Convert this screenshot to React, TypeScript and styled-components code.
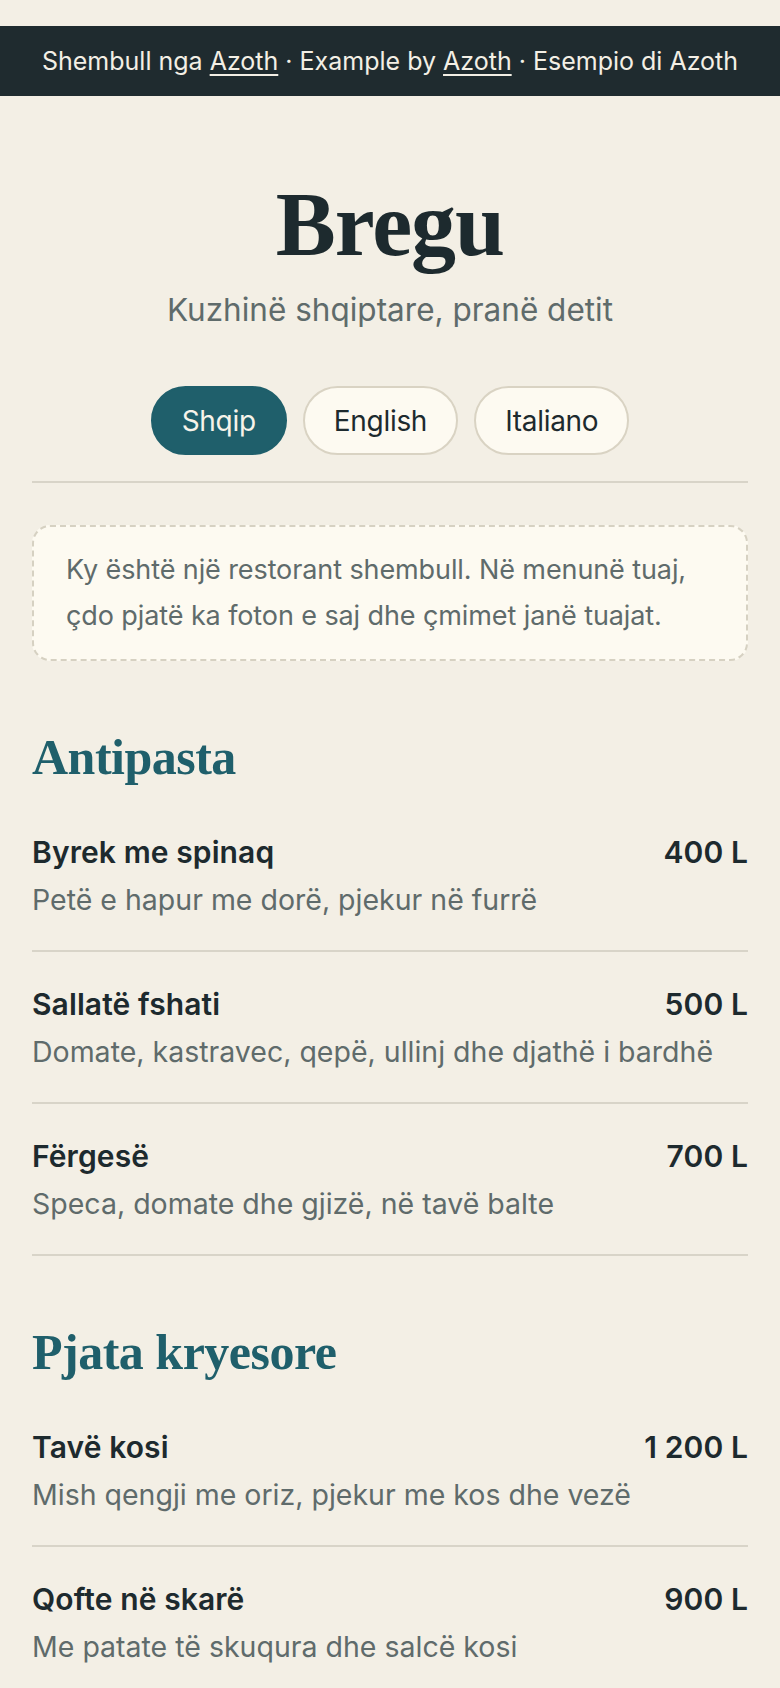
import styled, { createGlobalStyle } from "styled-components";

const GlobalStyle = createGlobalStyle`
  body {
    margin: 0;
    background: #f3efe5;
    font-family: Inter, "Noto Sans", sans-serif;
    color: #1d2a2e;
  }
`;

type Dish = { name: string; desc: string; price: string };
type Section = { title: string; dishes: Dish[] };

const menu: Section[] = [
  {
    title: "Antipasta",
    dishes: [
      { name: "Byrek me spinaq", desc: "Petë e hapur me dorë, pjekur në furrë", price: "400 L" },
      { name: "Sallatë fshati", desc: "Domate, kastravec, qepë, ullinj dhe djathë i bardhë", price: "500 L" },
      { name: "Fërgesë", desc: "Speca, domate dhe gjizë, në tavë balte", price: "700 L" },
    ],
  },
  {
    title: "Pjata kryesore",
    dishes: [
      { name: "Tavë kosi", desc: "Mish qengji me oriz, pjekur me kos dhe vezë", price: "1 200 L" },
      { name: "Qofte në skarë", desc: "Me patate të skuqura dhe salcë kosi", price: "900 L" },
    ],
  },
];

const langs = ["Shqip", "English", "Italiano"];

const App = () => {
  return (
    <Page>
      <GlobalStyle />
      <Banner>
        Shembull nga <a href="#">Azoth</a> · Example by <a href="#">Azoth</a> · Esempio di Azoth
      </Banner>
      <Content>
        <Header>
          <Title>Bregu</Title>
          <Subtitle>Kuzhinë shqiptare, pranë detit</Subtitle>
          <Langs>
            {langs.map((l, i) => (
              <Pill key={l} active={i === 0}>
                {l}
              </Pill>
            ))}
          </Langs>
        </Header>
        <Notice>
          Ky është një restorant shembull. Në menunë tuaj, çdo pjatë ka foton e saj dhe çmimet janë tuajat.
        </Notice>
        {menu.map((s) => (
          <MenuSection key={s.title}>
            <SectionTitle>{s.title}</SectionTitle>
            {s.dishes.map((d) => (
              <Item key={d.name}>
                <ItemTop>
                  <Name>{d.name}</Name>
                  <Price>{d.price}</Price>
                </ItemTop>
                <Desc>{d.desc}</Desc>
              </Item>
            ))}
          </MenuSection>
        ))}
      </Content>
    </Page>
  );
};

export default App;

const Page = styled.div`
  padding-top: 26px;
  min-height: 100vh;
`;

const Banner = styled.div`
  height: 70px;
  background: #1f2b2f;
  color: #f3efe5;
  font-size: 25px;
  display: flex;
  align-items: center;
  justify-content: center;
  white-space: pre;

  a {
    color: inherit;
    text-decoration: underline;
    text-underline-offset: 4px;
    text-decoration-thickness: 1.5px;
  }
`;

const Content = styled.div`
  padding: 0 32px;
`;

const Header = styled.header`
  display: flex;
  flex-direction: column;
  align-items: center;
  padding: 84px 0 26px;
  border-bottom: 2px solid #d8d4c8;
`;

const Title = styled.h1`
  margin: 0;
  font-family: "Liberation Serif", serif;
  font-weight: 700;
  font-size: 90px;
  line-height: 1;
  color: #1d2a2e;
  letter-spacing: -1px;
`;

const Subtitle = styled.p`
  margin: 20px 0 0;
  font-size: 31.5px;
  color: #5f6b6b;
`;

const Langs = styled.div`
  display: flex;
  gap: 16px;
  margin-top: 57px;
`;

const Pill = styled.button<{ active?: boolean }>`
  height: 69px;
  padding: 0 29px;
  border-radius: 999px;
  font-family: Inter, sans-serif;
  font-size: 28px;
  letter-spacing: -0.3px;
  cursor: pointer;
  border: 2px solid ${(p) => (p.active ? "#1f5f6b" : "#d9d3c3")};
  background: ${(p) => (p.active ? "#1f5f6b" : "#fdfaf1")};
  color: ${(p) => (p.active ? "#f6f3ea" : "#1d2a2e")};
`;

const Notice = styled.div`
  margin-top: 42px;
  padding: 20px 32px;
  border: 2px dashed #d6d1c2;
  border-radius: 18px;
  background: #fdfaf1;
  color: #5f6b6b;
  font-size: 27px;
  line-height: 46px;
  letter-spacing: -0.1px;
`;

const MenuSection = styled.section`
  margin-top: 66px;
`;

const SectionTitle = styled.h2`
  margin: 0 0 13px;
  font-family: "Liberation Serif", serif;
  font-weight: 700;
  font-size: 50px;
  line-height: 60px;
  color: #1f5f6b;
  letter-spacing: -0.5px;
`;

const Item = styled.div`
  display: flex;
  flex-direction: column;
  gap: 8px;
  padding: 32px 0 30px;
  border-bottom: 2px solid #d8d4c8;
`;

const ItemTop = styled.div`
  display: flex;
  justify-content: space-between;
  align-items: baseline;
`;

const Name = styled.span`
  font-size: 30px;
  line-height: 40px;
  font-weight: 600;
  letter-spacing: 0.1px;
  color: #1d2a2e;
`;

const Price = styled(Name)``;

const Desc = styled.span`
  font-size: 28.5px;
  line-height: 40px;
  color: #5f6b6b;
`;
